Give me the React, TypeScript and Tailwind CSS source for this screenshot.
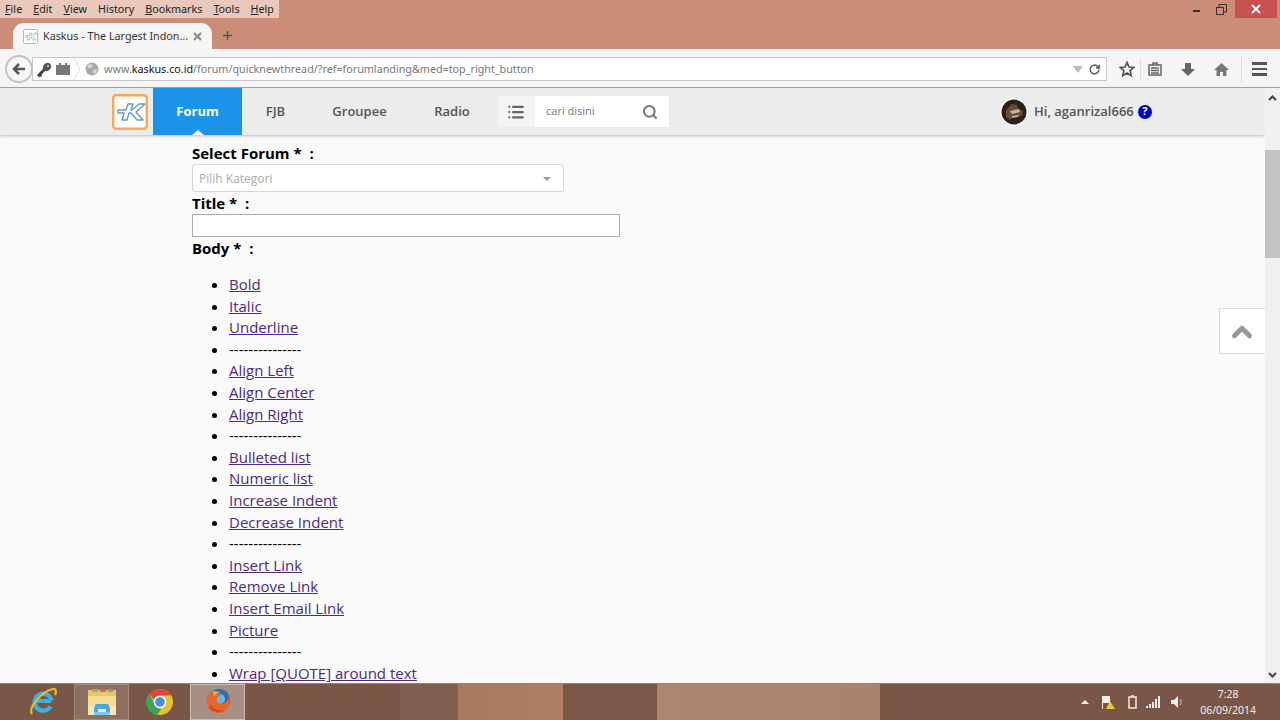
import { ChevronUp, List, Search } from "lucide-react";

const links: (string | null)[] = [
  "Bold",
  "Italic",
  "Underline",
  null,
  "Align Left",
  "Align Center",
  "Align Right",
  null,
  "Bulleted list",
  "Numeric list",
  "Increase Indent",
  "Decrease Indent",
  null,
  "Insert Link",
  "Remove Link",
  "Insert Email Link",
  "Picture",
  null,
  "Wrap [QUOTE] around text",
];

const menus = [
  ["F", "ile"],
  ["E", "dit"],
  ["V", "iew"],
  ["", "History"],
  ["B", "ookmarks"],
  ["T", "ools"],
  ["H", "elp"],
];

const KaskusLogo = ({ size }: { size: number }) => (
  <svg width={size} height={size} viewBox="0 0 36 36">
    <rect x="1.200" y="1.200" width="33.600" height="33.600" rx="3" fill="#fffdf8" stroke="#f0ac5c" strokeWidth="2.400" />
    <path
      d="M6 16h8l2-6h5l-2 6h1l7-6h6l-9 8 7 8h-6l-6-7h-2l-2 7h-5l2-7H6z"
      fill="#fff"
      stroke="#5f9dbd"
      strokeWidth="1.400"
      strokeLinejoin="round"
    />
  </svg>
);

const IeIcon = () => (
  <svg width="32" height="32" viewBox="0 0 32 32">
    <path d="M10 16h14M23.500 21.500a8.500 8.500 0 1 1 1-6" fill="none" stroke="#35b2e6" strokeWidth="4.200" />
    <path d="M5 29C1 24 13 7 26 4c3.500-.7 3.500 3 2 6" fill="none" stroke="#efb52f" strokeWidth="2.200" />
  </svg>
);

const FolderIcon = () => (
  <svg width="32" height="30" viewBox="0 0 32 30">
    <path d="M2 3h28v25H2z" fill="#f5dc90" />
    <path d="M2 3h28v6H2z" fill="#e6c56e" />
    <rect x="6" y="2" width="6" height="3" fill="#a9a27c" />
    <rect x="14" y="2" width="6" height="3" fill="#c2705f" />
    <rect x="22" y="2" width="5" height="3" fill="#86a46c" />
    <path d="M2 19h28v9H2z" fill="#f8e8b2" />
    <path d="M8 28v-7l2-4h12l2 4v7h-4v-6h-8v6z" fill="#4aa9dc" />
    <rect x="8" y="25" width="16" height="3" fill="#7cc8ea" />
  </svg>
);

const ChromeIcon = () => (
  <svg width="28" height="28" viewBox="0 0 28 28">
    <circle cx="14" cy="14" r="13" fill="#e5c233" />
    <path d="M14 1a13 13 0 0 1 11.300 6.500H14A6.500 6.500 0 0 0 7.800 12L3.500 5.500A13 13 0 0 1 14 1z" fill="#d9483b" />
    <path d="M3.500 5.500 8 15a6.500 6.500 0 0 0 7.500 5.300L11.500 27A13 13 0 0 1 3.500 5.500z" fill="#3ba55c" />
    <circle cx="14" cy="14" r="6.300" fill="#fff" />
    <circle cx="14" cy="14" r="4.800" fill="#4a8fe0" />
  </svg>
);

const FirefoxIcon = () => (
  <svg width="30" height="30" viewBox="0 0 30 30">
    <circle cx="16" cy="13" r="11" fill="#2a6fb0" />
    <circle cx="17" cy="12" r="5" fill="#6fb4dc" />
    <path
      d="M4 11c1-3 3-6 6-7-1 2-1 3 0 4 3-2 7-1 8 1-3 0-5 2-4 5 1 3 6 4 9 1 2-2 3-4 2-7 3 5 2 12-3 16-6 4-14 2-17-4-1-3-2-6-1-9z"
      fill="#e8662a"
    />
    <path d="M6 20c3 5 10 7 16 3-5 1-11 0-14-5z" fill="#d8431f" />
    <path d="M10 4c2 0 5 0 7 2-2 0-4 1-6 3-1-1-2-3-1-5z" fill="#f7a82c" />
  </svg>
);

export default function App() {
  return (
    <div className="flex h-[720px] w-[1280px] flex-col overflow-hidden bg-[#fafafa] font-['Open_Sans',sans-serif]">
      {/* window title area */}
      <div className="flex h-[49px] shrink-0 flex-col bg-[#cb8d77] font-['Noto_Sans',sans-serif]">
        <div className="flex h-[23px] items-start justify-between">
          <div className="flex h-[18px] w-[279px] items-center gap-[11px] bg-[#e8c9bb] pl-[5px] text-[10.750px] text-[#222]">
            {menus.map(([key, rest]) => (
              <span key={rest}>
                <span className="underline">{key}</span>
                {rest}
              </span>
            ))}
          </div>
          <div className="flex items-start">
            <div className="mt-[10px] mr-[16px] h-[2px] w-[7px] bg-[#333]" />
            <svg className="mt-[4px] mr-[8px]" width="11" height="11" viewBox="0 0 11 11" fill="none" stroke="#333">
              <rect x="0.500" y="3.500" width="7" height="7" />
              <path d="M3 3V.5h7.500V8H8" />
            </svg>
            <div className="flex h-[18px] w-[42px] items-center justify-center bg-[#c75050] mr-[3px]">
              <svg width="10" height="10" viewBox="0 0 10 10" stroke="#fff" strokeWidth="2">
                <path d="M1 1l8 8M9 1l-8 8" />
              </svg>
            </div>
          </div>
        </div>
        <div className="flex h-[26px] items-end">
          <div className="ml-[13px] flex h-[26px] w-[199px] items-center rounded-t-[11px] bg-[#f5f5f5] pl-[10px] pr-[10px]">
            <div className="flex h-[15px] w-[15px] items-center justify-center">
              <KaskusLogo size={15} />
            </div>
            <span className="ml-[5px] flex-1 pt-[1px] text-[10.750px] whitespace-nowrap text-[#333]">Kaskus - The Largest Indon...</span>
            <svg width="9" height="9" viewBox="0 0 9 9" stroke="#888" strokeWidth="2">
              <path d="M1 1l7 7M8 1l-7 7" />
            </svg>
          </div>
          <svg className="mb-[8px] ml-[10px]" width="11" height="11" viewBox="0 0 11 11" stroke="#555" strokeWidth="1.500">
            <path d="M5.500 1v9M1 5.500h9" />
          </svg>
        </div>
      </div>

      {/* address bar */}
      <div className="flex h-[39px] shrink-0 items-center border-b border-[#a0a0a0] bg-[#f5f5f5] pt-[2px] font-['Noto_Sans',sans-serif]">
        <div className="ml-[5px] flex h-[28px] w-[28px] items-center justify-center rounded-full border-2 border-[#c4c4c4] bg-[#f7f7f7]">
          <svg width="14" height="12" viewBox="0 0 14 12" fill="none" stroke="#555" strokeWidth="2.500">
            <path d="M13 6H3M7 1L2 6l5 5" />
          </svg>
        </div>
        <div className="-ml-px flex h-[24px] w-[1075px] items-center border border-[#c7c7c7] bg-white pr-[4px]">
          <svg className="ml-[3px]" width="17" height="17" viewBox="0 0 17 17">
            <path d="M2 15l7-7" stroke="#444" strokeWidth="3" />
            <path d="M2 15h3v-2" stroke="#444" strokeWidth="1.500" fill="none" />
            <ellipse cx="11" cy="6" rx="4.500" ry="3.800" transform="rotate(-45 11 6)" fill="#555" />
            <circle cx="12" cy="5" r="1" fill="#ddd" />
          </svg>
          <svg className="ml-[3px]" width="14" height="12" viewBox="0 0 14 12" fill="#777">
            <path d="M0 2h3V0h2v2h4V0h2v2h3v10H0z" />
          </svg>
          <svg className="ml-[3px]" width="8" height="22" viewBox="0 0 8 22" fill="none" stroke="#ddd">
            <path d="M1 0l6 11-6 11" />
          </svg>
          <svg className="ml-[4px]" width="14" height="14" viewBox="0 0 14 14">
            <circle cx="7" cy="7" r="6.500" fill="#aaa" />
            <path d="M3 3c2-1 4-1 5 0L6 6 3 6zM8 8l4-1-1 4-2 1z" fill="#d8d8d8" />
          </svg>
          <span className="ml-[5px] flex-1 text-[10.750px] text-[#777]">
            www.<span className="text-[#111]">kaskus.co.id</span>/forum/quicknewthread/?ref=forumlanding&med=top_right_button
          </span>
          <svg width="10" height="7" viewBox="0 0 10 7">
            <path d="M0 0h10L5 7z" fill="#bbb" />
          </svg>
          <svg className="ml-[5px] mr-[1px]" width="13" height="13" viewBox="0 0 24 24" fill="none" stroke="#666" strokeWidth="3">
            <path d="M20 12a8 8 0 1 1-2.500-5.800L21 9M21 3v6h-6" />
          </svg>
        </div>
        <svg className="ml-[12px]" width="16" height="16" viewBox="0 0 24 24" fill="none" stroke="#555" strokeWidth="2.500">
          <path d="M12 2l3 7 7 .7-5.300 4.800L18.300 22 12 18l-6.300 4 1.600-7.500L2 9.700 9 9z" />
        </svg>
        <div className="ml-[5px] h-[22px] w-px bg-[#ddd]" />
        <svg className="ml-[7px]" width="14" height="14" viewBox="0 0 14 14" fill="none" stroke="#666" strokeWidth="1.500">
          <path d="M1 3h12v10H1zM5 3V1h4v2M3 6h8M3 8.500h8M3 11h8" />
        </svg>
        <svg className="ml-[19px]" width="14" height="14" viewBox="0 0 14 14">
          <path d="M4 1h6v6h4l-7 7-7-7h4z" fill="#666" />
        </svg>
        <svg className="ml-[19px]" width="15" height="14" viewBox="0 0 15 14">
          <path d="M7.500 1L0 8h2.500v6h3.500v-4h3v4h3.500V8H15z" fill="#777" />
        </svg>
        <div className="ml-[12px] h-[26px] w-px bg-[#ddd]" />
        <div className="ml-[10px] flex w-[15px] flex-col gap-[3px]">
          <div className="h-[2.500px] bg-[#555]" />
          <div className="h-[2.500px] bg-[#555]" />
          <div className="h-[2.500px] bg-[#555]" />
        </div>
      </div>

      {/* page with scrollbar */}
      <div className="flex min-h-0 flex-1">
        <div className="relative min-w-0 flex-1 overflow-hidden">
          <div className="flex h-[47px] items-stretch bg-[#ececec] shadow-[0_1px_3px_rgba(0,0,0,0.25)]">
            <div className="ml-[112px] flex w-[41px] items-center">
              <KaskusLogo size={36} />
            </div>
            <div className="relative flex w-[89px] items-center justify-center bg-[#1a93e8] text-[13px] font-bold text-white">
              Forum
              <div className="absolute bottom-0 left-[39px] h-0 w-0 border-x-[6px] border-b-[5px] border-x-transparent border-b-white" />
            </div>
            <div className="flex w-[67px] items-center justify-center text-[13px] font-semibold text-[#555]">FJB</div>
            <div className="flex w-[101px] items-center justify-center text-[13px] font-semibold text-[#555]">Groupee</div>
            <div className="flex w-[84px] items-center justify-center text-[13px] font-semibold text-[#555]">Radio</div>
            <div className="ml-[4px] flex h-[31px] w-[171px] self-center">
              <div className="flex w-[37px] items-center justify-center bg-[#f4f4f4]">
                <List size={18} strokeWidth={3} color="#666" className="-ml-[2px]" />
              </div>
              <div className="flex flex-1 items-center justify-between bg-white pl-[11px] pr-[11px] text-[11px] text-[#777]">
                cari disini
                <Search size={16} strokeWidth={3} color="#777" />
              </div>
            </div>
            <div className="ml-[331px] flex items-center">
              <svg width="28" height="28" viewBox="0 0 28 28">
                <circle cx="14" cy="14" r="14" fill="#fff" />
                <circle cx="14" cy="14" r="12.500" fill="#2e2018" />
                <path d="M6 12l6-6 5 1 1 4 5 2-1 5-8 1-4 3-4-3z" fill="#6a4c38" />
                <path d="M10 13l9-2 1 3-8 2zM12 18l7-1-1 2-6 1z" fill="#c9b49c" />
              </svg>
              <span className="ml-[6px] text-[13px] font-semibold text-[#555]">Hi, aganrizal666</span>
              <span className="ml-[4px] flex h-[14px] w-[14px] items-center justify-center rounded-full bg-[#0000c0] text-[11px] font-bold text-white">?</span>
            </div>
          </div>

          <div className="pl-[192px] pt-[7px] text-[15px] leading-[21.600px] text-black">
            <div className="text-[15px] leading-[22px] font-bold">Select Forum *&nbsp; :</div>
            <div className="flex h-[28px] w-[372px] items-center justify-between rounded-[3px] border border-[#d5d5d5] bg-white pl-[6px] pr-[12px] pt-[1px] text-[12px] text-[#aaa]">
              Pilih Kategori
              <div className="h-0 w-0 border-x-[4px] border-t-[4px] border-x-transparent border-t-[#999]" />
            </div>
            <div className="leading-[22px] font-bold">Title *&nbsp; :</div>
            <div className="h-[23px] w-[428px] border border-[#aaa] bg-white" />
            <div className="leading-[22px] font-bold">Body *&nbsp; :</div>
            <ul className="mt-[15px] list-disc pl-[37px]">
              {links.map((link, i) => (
                <li key={i}>
                  {link ? <a className="text-[#4b2a80] underline">{link}</a> : "---------------"}
                </li>
              ))}
            </ul>
          </div>

          <div className="absolute right-0 top-[220px] flex h-[46px] w-[46px] items-center justify-center border-y border-l border-[#dcdcdc] bg-white pt-[2px] pr-[1px]">
            <ChevronUp size={30} strokeWidth={4} color="#999" />
          </div>
        </div>

        <div className="flex w-[15px] shrink-0 flex-col bg-[#f0f0f0]">
          <div className="flex h-[19px] items-center justify-center">
            <svg width="9" height="6" viewBox="0 0 9 6" fill="none" stroke="#444" strokeWidth="2">
              <path d="M1 5l3.500-3.500L8 5" />
            </svg>
          </div>
          <div className="mt-[43px] h-[108px] bg-[#c3c3c3]" />
          <div className="flex-1" />
          <div className="flex h-[17px] items-center justify-center">
            <svg width="9" height="6" viewBox="0 0 9 6" fill="none" stroke="#444" strokeWidth="2">
              <path d="M1 1l3.500 3.500L8 1" />
            </svg>
          </div>
        </div>
      </div>

      {/* taskbar */}
      <div className="flex h-[37px] shrink-0 items-stretch border-t border-[#a08070] bg-[#7a5646] font-['Noto_Sans',sans-serif] text-white">
        <div className="flex w-[74px] items-center justify-end pb-[2px] pr-[15px]">
          <IeIcon />
        </div>
        <div className="flex w-[55px] items-center justify-center border border-[#a08a7e] bg-[#8d6f60]">
          <FolderIcon />
        </div>
        <div className="flex w-[61px] items-center justify-center">
          <ChromeIcon />
        </div>
        <div className="flex w-[55px] items-center justify-center border border-[#cbbab0] bg-[#a78f84]">
          <FirefoxIcon />
        </div>
        <div className="w-[155px]" />
        <div className="w-[58px] bg-[#80604f]" />
        <div className="w-[105px] bg-[linear-gradient(90deg,#a9785f,#b07d65)]" />
        <div className="w-[94px] bg-[#7a5848]" />
        <div className="w-[223px] bg-[linear-gradient(90deg,#ad8672,#a98270)]" />
        <div className="flex flex-1 items-center justify-end">
          <div className="mr-[12px] h-0 w-0 border-x-[4px] border-b-[4px] border-x-transparent border-b-white" />
          <svg width="15" height="15" viewBox="0 0 15 15">
            <path d="M1 1h8v7H2v6H1z" fill="#eee" />
            <path d="M9 6l5 8H5z" fill="#e8c93a" />
          </svg>
          <svg className="ml-[12px]" width="9" height="14" viewBox="0 0 9 14" fill="none" stroke="#eee" strokeWidth="1.500">
            <rect x="1" y="2" width="7" height="11" />
            <path d="M3 1h3" />
          </svg>
          <svg className="ml-[9px]" width="14" height="12" viewBox="0 0 14 12" fill="#eee">
            <rect x="0" y="10" width="2" height="2" />
            <rect x="3" y="8" width="2" height="4" />
            <rect x="6" y="6" width="2" height="6" />
            <rect x="9" y="3" width="2" height="9" />
            <rect x="12" y="0" width="2" height="12" />
          </svg>
          <svg className="ml-[11px]" width="12" height="12" viewBox="0 0 12 12" fill="#eee">
            <path d="M0 4h3l4-4v12L3 8H0z" />
            <path d="M9 3c1.500 1.500 1.500 4.500 0 6" stroke="#ccc" fill="none" />
          </svg>
          <div className="ml-[17px] mr-[24px] flex flex-col items-center text-[10.500px] leading-[16px] text-[#eee]">
            <span>7:28</span>
            <span>06/09/2014</span>
          </div>
        </div>
      </div>
    </div>
  );
}
